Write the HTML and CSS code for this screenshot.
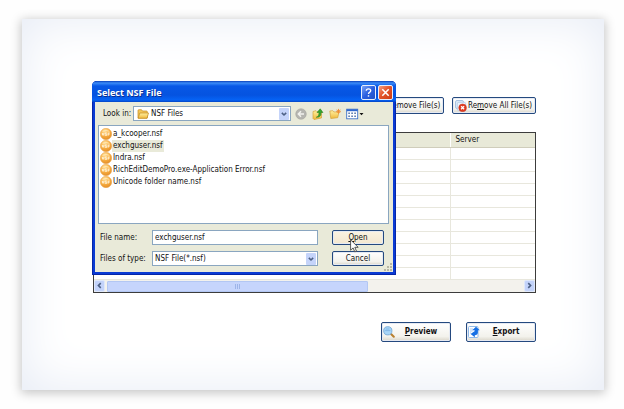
FILE: index.html
```html
<!DOCTYPE html>
<html lang="en">
<head>
<meta charset="utf-8">
<title>Select NSF File</title>
<link rel="stylesheet" href="styles.css">
</head>
<body>
<svg class="defs" aria-hidden="true">
  <defs>
    <radialGradient id="orange" cx="0.4" cy="0.25" r="0.8">
      <stop offset="0" stop-color="#ffe2a0"/><stop offset="0.5" stop-color="#f9b044"/><stop offset="1" stop-color="#e28a24"/>
    </radialGradient>
    <linearGradient id="folder" x1="0" y1="0" x2="0" y2="1">
      <stop offset="0" stop-color="#fff0a0"/><stop offset="1" stop-color="#f0b93c"/>
    </linearGradient>
    <symbol id="nsf" viewBox="0 0 12 12">
      <circle cx="6" cy="6" r="5.7" fill="url(#orange)" stroke="#e9a145" stroke-width="0.5"/>
      <path d="M2.4 5v2.4M2.4 5.6l1.4 1.8V5M6.8 5H5.2v1.2h1.6v1.2H5.1M8.2 7.6V5h1.6M8.2 6.2h1.4" fill="none" stroke="#fff3d8" stroke-width="0.9"/>
      <path d="M2.6 3.4Q6 1.2 9.4 3.4" fill="none" stroke="#ffe9b8" stroke-width="0.8"/>
    </symbol>
    <symbol id="remove" viewBox="0 0 12 12">
      <rect x="0.5" y="0.5" width="8" height="8" rx="1.5" fill="#dceaf8" stroke="#a9c3e2"/>
      <rect x="2.3" y="2.3" width="8.4" height="8.4" rx="1.5" fill="#eaf3fc" stroke="#a9c3e2" stroke-width="0.7"/>
      <circle cx="7.6" cy="7.8" r="3.9" fill="#df3a20" stroke="#c32c18" stroke-width="0.4"/>
      <path d="M6.1 6.3l3 3M9.1 6.3l-3 3" stroke="#fff" stroke-width="1.3"/>
    </symbol>
    <symbol id="chevron" viewBox="0 0 12 12">
      <path d="M3.4 4.6L6 7.2l2.6-2.6" fill="none" stroke="#4d6185" stroke-width="1.9"/>
    </symbol>
  </defs>
</svg>
<main class="panel">
  <div class="app">
    <div class="toolbar">
      <button class="xp-btn" type="button"><svg class="icon" aria-hidden="true"><use href="#remove"/></svg><span><u>R</u>emove File(s)</span></button>
      <button class="xp-btn" type="button"><svg class="icon" aria-hidden="true"><use href="#remove"/></svg><span>Re<u>m</u>ove All File(s)</span></button>
    </div>
    <div class="grid-box">
      <table class="files">
        <thead><tr><th scope="col"></th><th scope="col" class="server">Server</th></tr></thead>
        <tbody>
          <tr><td></td><td></td></tr><tr><td></td><td></td></tr><tr><td></td><td></td></tr>
          <tr><td></td><td></td></tr><tr><td></td><td></td></tr><tr><td></td><td></td></tr>
          <tr><td></td><td></td></tr><tr><td></td><td></td></tr><tr><td></td><td></td></tr>
          <tr><td></td><td></td></tr><tr><td></td><td></td></tr>
        </tbody>
      </table>
      <div class="scrollbar">
        <button class="scroll-end" type="button" aria-label="Scroll left"><svg viewBox="0 0 10 10"><path d="M6.4 2.4L3.8 5l2.6 2.6" fill="none" stroke="#4d6185" stroke-width="1.8"/></svg></button>
        <div class="track"><div class="thumb"><i></i><i></i><i></i></div></div>
        <button class="scroll-end" type="button" aria-label="Scroll right"><svg viewBox="0 0 10 10"><path d="M3.6 2.4L6.2 5 3.6 7.6" fill="none" stroke="#4d6185" stroke-width="1.8"/></svg></button>
      </div>
    </div>
    <div class="actions">
      <button class="xp-btn big" type="button">
        <svg class="icon" viewBox="0 0 12 12" aria-hidden="true">
          <path d="M7.8 7.8l3 3" stroke="#b9802f" stroke-width="2" stroke-linecap="round"/>
          <circle cx="4.8" cy="4.8" r="4.1" fill="#a7d5f7" stroke="#7fb0dc"/>
          <path d="M2.2 4.6h5.2M2.8 3h3.6" stroke="#7fb4e4" stroke-width="0.9"/>
        </svg>
        <span><u>P</u>review</span>
      </button>
      <button class="xp-btn big" type="button">
        <svg class="icon" viewBox="0 0 12 12" aria-hidden="true">
          <rect x="0.5" y="0.5" width="9.5" height="11" rx="1" fill="#fff" stroke="#8fb9e8"/>
          <path d="M2 3h3M2 5h2.5M2 7h1" stroke="#a9c9ee"/>
          <path d="M4.2 4.2L8 0.8l3.8 3.4H9.9v2.3Q9.6 9.3 6.8 9.3v2L2.6 8l4.2-2.9V7Q7 6.6 6.6 4.2z" fill="#1770e4"/>
        </svg>
        <span><u>E</u>xport</span>
      </button>
    </div>

    <section class="dialog" role="dialog" aria-labelledby="dlg-title">
      <header class="titlebar">
        <h1 id="dlg-title">Select NSF File</h1>
        <button class="cap help" type="button" aria-label="Help"><svg viewBox="0 0 12 12"><path d="M3.6 4.2Q3.6 2 6 2t2.4 2Q8.4 5.2 7 5.9 6 6.5 6 7.7" fill="none" stroke="#fff" stroke-width="1.5"/><path d="M5.2 9h1.6v1.5H5.2z" fill="#fff"/></svg></button>
        <button class="cap close" type="button" aria-label="Close"><svg viewBox="0 0 12 12"><path d="M2.5 2.5l7 7M9.5 2.5l-7 7" stroke="#fff" stroke-width="1.7"/></svg></button>
      </header>
      <div class="body">
        <div class="lookin">
          <label for="look">Look in:</label>
          <div class="combo">
            <svg class="icon" viewBox="0 0 12 12" aria-hidden="true"><path d="M1 10V2.5q0-.8.8-.8h2.7l1 1.300h4q.8 0 .8.8V10z" fill="#f3c75a" stroke="#c38b20" stroke-width="0.7"/><path d="M1.1 10.3L2.8 5h8.7L10 10.3z" fill="url(#folder)" stroke="#c38b20" stroke-width="0.7"/></svg>
            <select id="look"><option>NSF Files</option></select>
            <svg class="arrow" aria-hidden="true"><use href="#chevron"/></svg>
          </div>
          <div class="tools">
            <button type="button" aria-label="Back"><svg viewBox="0 0 12 12"><circle cx="6" cy="6" r="5.3" fill="#b5b5b0" stroke="#a0a09a" stroke-width="0.5"/><path d="M9 6H3.6M6 3.2L3.3 6 6 8.8" fill="none" stroke="#f2f2ee" stroke-width="1.5"/></svg></button>
            <button type="button" aria-label="Up one level"><svg viewBox="0 0 12 12"><path d="M1 3.5l3-.8 1 1 4.5-.5V10L2 11.5 1 10.5z" fill="url(#folder)" stroke="#cf9a2c" stroke-width="0.6"/><path d="M4.2 9.3Q7.3 8.8 7 4.5H5L8.2.8l2.8 3.7H9Q9.3 9.6 4.2 9.3z" fill="#36a52c" stroke="#1d7a1c" stroke-width="0.5"/></svg></button>
            <button type="button" aria-label="New folder"><svg viewBox="0 0 12 12"><path d="M.8 3l3-.3 1 1.2L10 4 8.7 9.7l-6.9.8z" fill="url(#folder)" stroke="#d6a33c" stroke-width="0.7"/><path d="M9.5.9v4.8M7.1 3.3h4.8M7.9 1.7l3.2 3.2M11.1 1.7L7.9 4.9" stroke="#f08a30" stroke-width="0.9"/></svg></button>
            <button class="views" type="button" aria-label="Views"><svg viewBox="0 0 18 12"><rect x=".7" y="1.2" width="11" height="9.6" fill="#fff" stroke="#3c72c8" stroke-width="0.9"/><path d="M.7 2.2h11" stroke="#2f68cc" stroke-width="2"/><path d="M2.3 5.2h1.6M5.3 5.2h1.6M8.3 5.2h1.6M2.3 8.2h1.6M5.3 8.2h1.6M8.3 8.2h1.6" stroke="#5577aa" stroke-width="1.6"/><path d="M13.5 5h4l-2 2.3z" fill="#111"/></svg></button>
          </div>
        </div>
        <ul class="list">
          <li><svg class="icon"><use href="#nsf"/></svg><span>a_kcooper.nsf</span></li>
          <li class="selected"><svg class="icon"><use href="#nsf"/></svg><span>exchguser.nsf</span></li>
          <li><svg class="icon"><use href="#nsf"/></svg><span>Indra.nsf</span></li>
          <li><svg class="icon"><use href="#nsf"/></svg><span>RichEditDemoPro.exe-Application Error.nsf</span></li>
          <li><svg class="icon"><use href="#nsf"/></svg><span>Unicode folder name.nsf</span></li>
        </ul>
        <div class="form">
          <label for="fname">File name:</label>
          <input id="fname" type="text" value="exchguser.nsf">
          <div class="open-wrap">
            <button class="xp-btn open" type="button"><span><u>O</u>pen</span></button>
            <svg class="cursor" viewBox="0 0 9 14" aria-hidden="true"><path d="M.6.8v10.4l2.5-2.3 1.7 4 1.7-.7-1.7-3.9h3.4z" fill="#fff" stroke="#333" stroke-width="0.8"/></svg>
          </div>
          <label for="ftype">Files of type:</label>
          <div class="combo">
            <select id="ftype"><option>NSF File(*.nsf)</option></select>
            <svg class="arrow" aria-hidden="true"><use href="#chevron"/></svg>
          </div>
          <button class="xp-btn" type="button"><span>Cancel</span></button>
        </div>
      </div>
      <svg class="grip" viewBox="0 0 8 8" aria-hidden="true"><path d="M6 0h2v2H6zM3 3h2v2H3zM6 3h2v2H6zM0 6h2v2H0zM3 6h2v2H3zM6 6h2v2H6z" fill="#b9b7a4"/></svg>
    </section>
  </div>
</main>
</body>
</html>
```
FILE: styles.css
```css
* { box-sizing: border-box; }

body {
  margin: 0;
  padding: 19px 20px 19px 22px;
  background: #fefefe;
  font: 8px/12px "DejaVu Sans Condensed", "DejaVu Sans", sans-serif;
  color: #111;
}

button, input, select { font: inherit; color: inherit; margin: 0; }
button { cursor: default; }
svg { display: block; }
.defs { position: absolute; width: 0; height: 0; }

.panel {
  padding: 78px 68px 48px 71px;
  background: #fff;
  box-shadow: 0 2px 10px 1px #c4c4c4, inset 0 0 50px #e6ebf5;
}

.app { position: relative; }

.icon { width: 12px; height: 12px; flex: none; }

.xp-btn {
  display: flex;
  align-items: center;
  height: 15px;
  padding: 0 3px;
  border: 1px solid #24497f;
  border-radius: 2px;
  background: linear-gradient(#fff, #f3f2ec 75%, #d9d5c9);
  box-shadow: inset 0 0 0 1px #e6eaf2;
  line-height: 12px;
}
.xp-btn span { flex: 1; text-align: center; white-space: nowrap; }

.toolbar { display: flex; justify-content: flex-end; gap: 8px; }
.toolbar .xp-btn { width: 84px; height: 17px; padding: 0 2px; }
.toolbar .xp-btn:first-child { width: 72px; }

.grid-box { margin-top: 18px; border: 1px solid #3c3c3c; background: #fff; }

.files { width: 100%; border-collapse: collapse; table-layout: fixed; }
.files th {
  height: 14px;
  padding: 0 5px;
  background: #e8e9d8;
  border-right: 1px solid #fff;
  border-bottom: 1px solid #cfcdbb;
  font-weight: normal;
  text-align: left;
}
.files .server { width: 85px; }
.files td {
  height: 12px;
  padding: 0;
  border-right: 1px solid #e8e7dd;
  border-bottom: 1px solid #e8e7dd;
}
.files th:last-child, .files td:last-child { border-right: 0; }

.scrollbar { display: flex; height: 12px; gap: 2px; background: #f3f2ed; }
.scroll-end {
  width: 11px;
  padding: 0;
  border: 1px solid #dfe8fb;
  border-radius: 2px;
  background: #c3d3fa;
}
.track { flex: 1; padding-top: 1px; }
.thumb {
  display: flex;
  justify-content: center;
  align-items: center;
  gap: 1px;
  width: 63%;
  height: 11px;
  border: 1px solid #b3c7f3;
  border-radius: 1px;
  background: #c6d5fc;
}
.thumb i { width: 1px; height: 5px; background: #9db4e8; }

.actions { display: flex; justify-content: flex-end; gap: 15px; margin-top: 29px; }
.big { width: 70px; height: 20px; padding: 0 3px 0 1px; font-weight: bold; }

.dialog {
  position: absolute;
  top: -16px;
  left: -1px;
  width: 304px;
  padding: 0 3px 3px;
  border-radius: 5px 5px 0 0;
  background: #0a3bd4;
  box-shadow: inset 0 0 0 1px #0626a8;
}
.titlebar {
  display: flex;
  align-items: center;
  gap: 2px;
  height: 21px;
  margin: 0 -3px;
  padding: 2px 3px 0 5px;
  border-radius: 5px 5px 0 0;
  background: linear-gradient(#0a3fb8, #3b8cf8 2px, #0858e6 5px, #0553e0 14px, #0663f5 19px, #0444c4);
}
.titlebar h1 {
  flex: 1;
  margin: 0;
  color: #fff;
  font: bold 9px/14px "Open Sans", "Noto Sans", sans-serif;
  text-shadow: 1px 1px #0a2f90;
}
.cap {
  width: 15px;
  height: 15px;
  padding: 1px;
  border: 1px solid #e8eefc;
  border-radius: 2px;
  background: linear-gradient(135deg, #7ba3f5, #2a5fe0 50%, #1e50c8);
}
.close { background: linear-gradient(135deg, #f2a083, #e4542b 45%, #cc3c14); }

.body { padding: 4px 4px 6px 3px; background: #e9ead9; }

.lookin { display: flex; align-items: center; }
.lookin label { width: 35px; padding-left: 5px; white-space: nowrap; }
.lookin .combo { width: 158px; padding-left: 3px; }

.combo {
  display: flex;
  align-items: center;
  height: 15px;
  border: 1px solid #8aa6c0;
  background: #fff;
}
.combo select {
  flex: 1;
  min-width: 0;
  height: 13px;
  padding: 0 2px;
  border: 0;
  background: transparent;
  appearance: none;
}
.combo .arrow {
  width: 10px;
  height: 12px;
  margin-right: 1px;
  border-radius: 1px;
  background: #c5d4fa;
  pointer-events: none;
}

.tools { display: flex; gap: 5px; margin-left: 4px; }
.tools button { width: 12px; padding: 0; border: 0; background: none; }
.tools .views { width: 18px; }

.list {
  height: 99px;
  margin: 4px 0 6px;
  padding: 2px 1px;
  border: 1px solid #8aa6c0;
  background: #fff;
  list-style: none;
}
.list li { display: flex; height: 12px; }
.list span { padding: 0 1px; }
.selected span { background: #e9ead9; }

.form {
  display: grid;
  grid-template-columns: 53px 166px 66px;
  column-gap: 1px;
  row-gap: 6px;
  align-items: center;
}
.form label { padding-left: 2px; }
.form input {
  height: 15px;
  padding: 0 2px;
  border: 1px solid #8aa6c0;
  background: #fff;
}
.form > :nth-child(3n) { margin-left: 13px; width: 52px; }
.open-wrap { position: relative; }
.open { width: 100%; background: linear-gradient(#fbf3e2, #f3e7cf); }
.cursor { position: absolute; left: 18px; top: 9px; width: 9px; height: 14px; }
.grip { position: absolute; right: 4px; bottom: 4px; width: 8px; height: 8px; }
```
